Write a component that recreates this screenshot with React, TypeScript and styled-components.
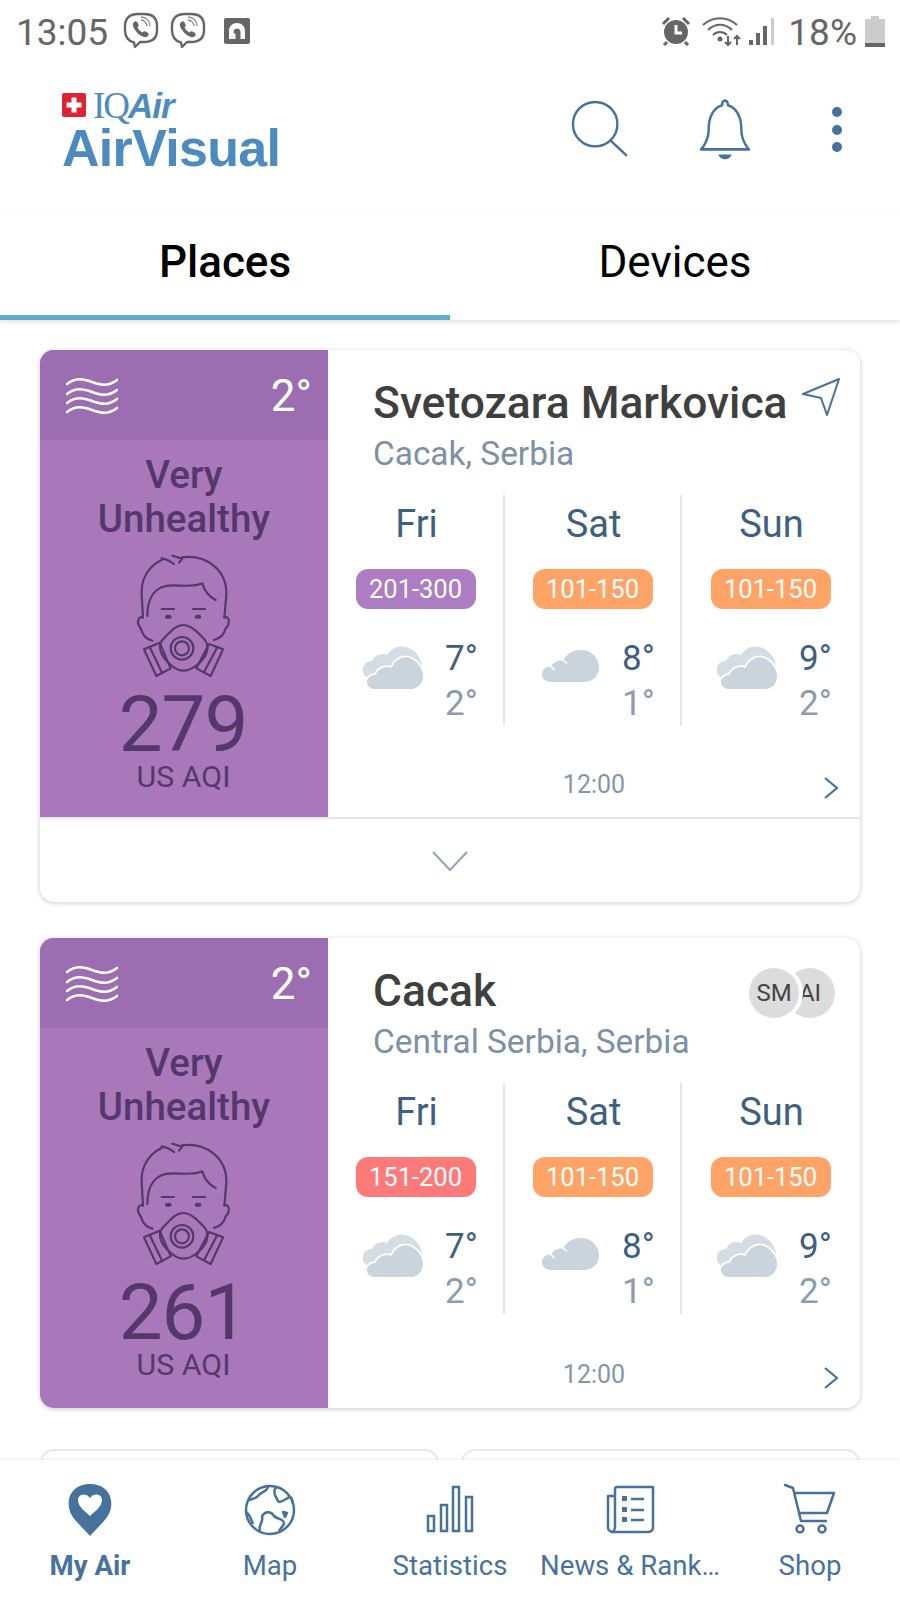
import React from "react";
import styled, { createGlobalStyle } from "styled-components";

const Global = createGlobalStyle`
  html, body { margin: 0; padding: 0; background: #fff; }
  body { font-family: Roboto, "Liberation Sans", sans-serif; }
  * { box-sizing: border-box; }
`;

const Screen = styled.div`
  width: 900px; height: 1600px; background: #fff; overflow: hidden;
  display: flex; flex-direction: column; color: #47729e;
`;
const StatusBar = styled.div`
  height: 60px; flex: none; display: flex; align-items: center; padding: 2px 15px 0 16px; color: #666;
  font-size: 37px; line-height: 1;
`;
const StatusLeft = styled.div`display: flex; align-items: center; gap: 0; flex: 1;`;
const StatusRight = styled.div`display: flex; align-items: center;`;
const StatusText = styled.span<{ $left?: number }>`
  margin-top: 3px; margin-left: ${p => p.$left ?? 0}px;
`;
const Header = styled.div`
  height: 155px; flex: none; display: flex; align-items: flex-start; justify-content: space-between;
  padding: 33px 0 0 62px;
`;
const Logo = styled.div`display: flex; flex-direction: column; color: #4d8bbf;`;
const LogoTop = styled.div`display: flex; align-items: flex-start; height: 35px;`;
const Flag = styled.svg`width: 24px; height: 24px; flex: none; margin-right: 7px;`;
const IQ = styled.span`font-family: "Liberation Serif", serif; font-size: 37px; line-height: 26px; letter-spacing: -2px;`;
const LogoAir = styled.span`font-family: "Liberation Sans", sans-serif; font-style: italic; font-weight: 700; font-size: 35px; line-height: 26px; letter-spacing: -1px;`;
const LogoMain = styled.div`font-family: "Liberation Sans", sans-serif; font-weight: 700; font-size: 52px; line-height: 40px; letter-spacing: -0.7px;`;
const HeaderIcons = styled.div`display: flex; align-items: flex-start; padding: 7px 57px 0 0;`;
const Tabs = styled.div`
  height: 105px; flex: none; display: grid; grid-template-columns: 1fr 1fr; position: relative; z-index: 2;
  box-shadow: 0 2px 4px rgba(0,0,0,.12); background: #fff;
`;
const Tab = styled.div<{ $active?: boolean }>`
  display: flex; align-items: center; justify-content: center; color: #000; font-size: 44px;
  font-weight: ${p => (p.$active ? 500 : 400)}; padding-bottom: 7px;
  border-bottom: 5px solid ${p => (p.$active ? "#5dacca" : "transparent")};
`;
const Content = styled.div`
  flex: 1; min-height: 0; overflow: hidden; padding: 30px 40px 0; display: flex; flex-direction: column;
`;
const Card = styled.div`
  flex: none; background: #fff; border-radius: 14px; overflow: hidden;
  box-shadow: 0 1px 5px rgba(0,0,0,.22); margin-bottom: 36px;
`;
const CardTop = styled.div<{ $h: number }>`
  display: grid; grid-template-columns: 288px 1fr; height: ${p => p.$h}px;
`;
const Side = styled.div`background: #a878bb; display: flex; flex-direction: column; align-items: center; color: #54386b;`;
const SideHead = styled.div`
  width: 100%; height: 90px; flex: none; background: #9d6db1; display: flex; align-items: center; justify-content: space-between;
  padding: 2px 16px 0 26px; color: #fff; font-size: 44px;
`;
const Level = styled.div`
  margin-top: 13px; text-align: center; font-size: 38.5px; line-height: 44px; font-weight: 500;
`;
const Face = styled.svg`width: 130px; height: 150px; flex: none; margin-top: -1px;`;
const Aqi = styled.div`font-size: 78px; line-height: 74px; margin: -2px 2px 0 0; font-weight: 400; letter-spacing: -1px;`;
const AqiLabel = styled.div`font-size: 30.3px; line-height: 34px; margin: -2px 1px 0 0;`;
const Main = styled.div`display: flex; flex-direction: column; min-width: 0;`;
const TitleRow = styled.div`
  display: flex; align-items: center; justify-content: space-between; height: 50px; margin-top: 28px; padding: 0 18px 0 45px;
`;
const Title = styled.div`font-size: 44.4px; font-weight: 500; color: #3f3f3f; white-space: nowrap;`;
const Sub = styled.div`font-size: 33.4px; line-height: 40px; height: 40px; margin-top: 6px; padding-left: 45px; color: #7d90a6;`;
const Forecast = styled.div`display: grid; grid-template-columns: repeat(3, 177px); height: 226px; margin-top: 21px;`;
const Col = styled.div<{ $last?: boolean }>`
  display: flex; flex-direction: column; align-items: center;
  border-right: ${p => (p.$last ? "0" : "2px solid #e3e5e8")};
`;
const Day = styled.div`font-size: 38px; line-height: 54px; margin-top: 2px; padding-left: 2px; color: #3f5f82;`;
const Pill = styled.div<{ $bg: string }>`
  width: 120px; height: 40px; margin-top: 18px; border-radius: 12px; background: ${p => p.$bg}; color: #fff;
  font-size: 25.5px; line-height: 41px; text-align: center;
`;
const Weather = styled.div`align-self: stretch; display: flex; margin-top: 27px;`;
const CloudBox = styled.div`width: 117px; flex: none; padding: 9px 0 0 34px;`;
const Temps = styled.div`display: flex; flex-direction: column;`;
const Hi = styled.div`font-size: 35px; line-height: 45px; color: #3f5f82;`;
const Lo = styled.div`font-size: 35px; line-height: 45px; color: #8a9db0;`;
const Foot = styled.div<{ $extra?: number }>`
  display: grid; grid-template-columns: 1fr auto 1fr; align-items: center; padding-top: ${p => 43 + (p.$extra ?? 0)}px;
`;
const Time = styled.div`grid-column: 2; font-size: 25px; line-height: 42px; color: #8696a8;`;
const FootChevron = styled.svg`grid-column: 3; justify-self: end; width: 18px; height: 24px; margin: 6px 20px 0 0;`;
const Expand = styled.div`
  height: 85px; border-top: 2px solid #e6e7e9; display: flex; justify-content: center; padding-top: 31px;
`;
const Badges = styled.div`display: flex; align-items: center; padding-right: 7px; margin-top: 4px;`;
const Badge = styled.div<{ $front?: boolean }>`
  width: 50px; height: 50px; border-radius: 50%; background: #dcdcdc; color: #444; font-size: 24px; line-height: 50px; text-align: center;
  flex: none;
  ${p => p.$front ? "position: relative; z-index: 1; box-shadow: 0 0 0 4px #fff;" : "margin-left: -14px; overflow: hidden;"}
`;
const Row = styled.div`display: grid; grid-template-columns: 399px 399px; gap: 22px; margin-top: 5px;`;
const MiniCard = styled.div`height: 100px; background: #fff; border-radius: 14px; border: 2px solid #e8e8e8;`;
const Nav = styled.nav`
  flex: none; height: 140px; background: #fff; display: grid; grid-template-columns: repeat(5, 180px); position: relative; z-index: 2;
  box-shadow: 0 -1px 2px rgba(0,0,0,.07); padding-top: 22px;
`;
const NavItem = styled.div`display: flex; flex-direction: column; align-items: center;`;
const NavLabel = styled.div<{ $active?: boolean }>`
  margin-top: 8px; font-size: 27.6px; line-height: 40px; white-space: nowrap; font-weight: ${p => (p.$active ? 700 : 400)};
`;
const NavSvg = styled.svg`width: 60px; height: 56px; flex: none;`;

const Viber = ({ left = 0 }: { left?: number }) => (
  <svg width="36" height="38" viewBox="0 0 36 38" fill="none" style={{ marginLeft: left }}>
    <path d="M11 30.5C5 29 2 25 2 18V14C2 6 7 2 15 2h6c8 0 13 4 13 12v4c0 8-5 12-13 12h-4l-5 5z" stroke="#666" strokeWidth="2.4" strokeLinejoin="round" />
    <path d="M11 10c2-1.500 3-.5 4 1.500s1 2.500-.5 4c1 2 3 4 5 5 1.500-1.500 2-1.500 4-.5s3 2 1.500 4c-1.500 1.500-3 1.500-5.500.5-4-1.700-7-5-9-9-.8-2.500-1-4 .5-5.500z" fill="#666" />
    <path d="M18 8c3 0 6 3 6 6M18 5c5 0 9 4 9 9" stroke="#888" strokeWidth="1.300" />
  </svg>
);

const Waves = () => (
  <svg width="52" height="38" viewBox="0 0 52 38" fill="none" stroke="#fff" strokeWidth="2.600" strokeLinecap="round">
    {[5, 15, 24, 33].map(y => (
      <path key={y} d={`M1 ${y + 2}C10 ${y - 5} 18 ${y - 3} 26 ${y}S42 ${y + 5} 51 ${y - 2}`} />
    ))}
  </svg>
);

const FaceIcon = () => (
  <Face viewBox="0 0 390 450" fill="none" stroke="#54386b" strokeWidth="6.500" strokeLinecap="round" strokeLinejoin="round">
    <path d="M165 72C152 62 140 57 128 55" />
    <path d="M128 60C90 78 65 115 68 165L72 232" />
    <path d="M160 47L190 56L180 68" />
    <path d="M188 52C262 42 325 90 322 165L316 232" />
    <path d="M85 228C85 170 110 136 160 136C190 136 225 142 250 130C255 150 270 170 290 180" />
    <path d="M72 232C55 228 52 250 65 265C72 285 80 298 100 302" />
    <path d="M316 232C335 228 332 255 320 265C315 285 305 295 285 300" />
    <path d="M128 207H165M222 207H258" />
    <ellipse cx="148" cy="230" rx="10" ry="6" fill="#54386b" stroke="none" />
    <ellipse cx="237" cy="230" rx="10" ry="6" fill="#54386b" stroke="none" />
    <path d="M192 255C170 255 155 275 130 300C115 320 125 345 145 365C165 385 178 392 192 392C208 392 225 385 245 365C265 345 272 320 258 300C235 275 215 255 192 255Z" />
    <circle cx="189" cy="325" r="34" />
    <circle cx="189" cy="325" r="21" />
    <path d="M75 328L122 308L155 385L112 408Z" />
    <path d="M92 321L130 400" />
    <path d="M270 312L312 328L275 408L232 385Z" />
    <path d="M295 321L255 397" />
  </Face>
);

const DoubleCloud = () => (
  <svg width="63" height="46" viewBox="0 0 63 46">
    <path d="M8 34C2 32 0 27 1 23C2 18 6 16 10 16C13 9 21 8 25 10C29 3 37 0 44 2C54 5 60 14 60 22L40 34Z" fill="#d3dde3" />
    <path d="M13 45C7 45 4 41 4 37C4 33 8 29 13 29C16 22 24 20 29 22C33 13 42 9 50 13C58 17 62 25 62 31C62 40 55 45 48 45Z" fill="#c9d4dc" stroke="#fff" strokeWidth="1.800" />
  </svg>
);

const SingleCloud = () => (
  <svg width="58" height="34" viewBox="0 0 60 35" style={{ marginLeft: 3, marginTop: 4 }}>
    <path d="M9 34C3 34 0 30 0 26C0 21 4 18 9 18C12 13 17 11 22 12C25 5 32 1 40 1C51 1 59 9 59 19C59 28 52 34 43 34Z" fill="#c9d4dc" />
    <path d="M9 18C11 19 12 20 13 22M22 12C24 13 25 14 26 15" stroke="#fff" strokeWidth="1.500" fill="none" />
  </svg>
);

type F = { day: string; range: string; bg: string; cloud: "d" | "s"; hi: string; lo: string };
const purple = "#ad7cc2", red = "#fe7a7a", orange = "#ffa366";
const days = (first: string, bg: string): F[] => [
  { day: "Fri", range: first, bg, cloud: "d", hi: "7°", lo: "2°" },
  { day: "Sat", range: "101-150", bg: orange, cloud: "s", hi: "8°", lo: "1°" },
  { day: "Sun", range: "101-150", bg: orange, cloud: "d", hi: "9°", lo: "2°" },
];

const Place = ({ title, sub, aqi, h, range, bg, right, expand, extra }: {
  title: string; sub: string; aqi: string; h: number; range: string; bg: string; right: React.ReactNode; expand?: boolean; extra?: number;
}) => (
  <Card>
    <CardTop $h={h}>
      <Side>
        <SideHead><Waves /><span>2°</span></SideHead>
        <Level>Very<br />Unhealthy</Level>
        <FaceIcon />
        <Aqi>{aqi}</Aqi>
        <AqiLabel>US AQI</AqiLabel>
      </Side>
      <Main>
        <TitleRow><Title>{title}</Title>{right}</TitleRow>
        <Sub>{sub}</Sub>
        <Forecast>
          {days(range, bg).map((f, i) => (
            <Col key={f.day} $last={i === 2}>
              <Day>{f.day}</Day>
              <Pill $bg={f.bg}>{f.range}</Pill>
              <Weather>
                <CloudBox>{f.cloud === "d" ? <DoubleCloud /> : <SingleCloud />}</CloudBox>
                <Temps><Hi>{f.hi}</Hi><Lo>{f.lo}</Lo></Temps>
              </Weather>
            </Col>
          ))}
        </Forecast>
        <Foot $extra={extra}>
          <Time>12:00</Time>
          <FootChevron viewBox="0 0 18 24" fill="none" stroke="#47729e" strokeWidth="2.200"><path d="M3 2L15 12L3 22" /></FootChevron>
        </Foot>
      </Main>
    </CardTop>
    {expand && (
      <Expand>
        <svg width="36" height="22" viewBox="0 0 36 22" fill="none" stroke="#8da7c0" strokeWidth="2"><path d="M1 2L18 20L35 2" /></svg>
      </Expand>
    )}
  </Card>
);

export default function App() {
  return (
    <Screen>
      <Global />
      <StatusBar>
        <StatusLeft>
          <StatusText>13:05</StatusText>
          <Viber left={15} />
          <Viber left={11} />
          <svg width="26" height="26" viewBox="0 0 26 26" style={{ marginLeft: 18 }}>
            <rect width="26" height="26" rx="2" fill="#666" />
            <path d="M5 21V13C5 8 8.500 5 13 5s8 3 8 8v8h-4.500v-7c0-2-1.500-3.500-3.500-3.500S9.500 12 9.500 14v1l2 1v5z" fill="#fff" />
          </svg>
        </StatusLeft>
        <StatusRight>
          <svg width="32" height="30" viewBox="0 0 32 30" fill="#666">
            <circle cx="16" cy="16" r="12" />
            <path d="M3 8L9 2M29 8L23 2M7 26L4 29M25 26L28 29" stroke="#666" strokeWidth="3" />
            <path d="M16 9v8h6" stroke="#fff" strokeWidth="3" fill="none" />
          </svg>
          <svg width="42" height="32" viewBox="0 0 42 32" fill="none" stroke="#666" strokeWidth="2" style={{ marginLeft: 10 }}>
            <path d="M1 10C11 1 25 1 35 10M6 15C13 8 23 8 30 15M11 20C15 16 21 16 25 20" />
            <circle cx="18" cy="24" r="2.500" fill="#666" stroke="none" />
            <path d="M26 21v9M23 27l3 3 3-3M35 30v-9M32 24l3-3 3 3" strokeWidth="2" />
          </svg>
          <svg width="28" height="30" viewBox="0 0 28 30" style={{ marginLeft: 4 }}>
            <rect x="1" y="24" width="4" height="5" fill="#666" />
            <rect x="8" y="17" width="4" height="12" fill="#666" />
            <rect x="15" y="10" width="4" height="19" fill="#666" />
            <rect x="23" y="2" width="3" height="27" fill="#ccc" />
          </svg>
          <StatusText $left={12}>18%</StatusText>
          <svg width="20" height="31" viewBox="0 0 20 31" style={{ marginLeft: 8 }}>
            <path d="M6 0h8v3h6v28H0V3h6z" fill="#ccc" />
            <rect y="27" width="20" height="4" fill="#666" />
          </svg>
        </StatusRight>
      </StatusBar>
      <Header>
        <Logo>
          <LogoTop>
            <Flag viewBox="0 0 24 24">
              <rect width="24" height="24" rx="2" fill="#dc2434" />
              <path d="M9.500 4.500h5v5h5v5h-5v5h-5v-5h-5v-5h5z" fill="#fff" />
            </Flag>
            <IQ>IQ</IQ><LogoAir>Air</LogoAir>
          </LogoTop>
          <LogoMain>AirVisual</LogoMain>
        </Logo>
        <HeaderIcons>
          <svg width="58" height="58" viewBox="0 0 60 60" fill="none" stroke="#47729e" strokeWidth="2.500">
            <circle cx="25" cy="25" r="23" />
            <path d="M41 42L57 57" strokeLinecap="round" />
          </svg>
          <svg width="52" height="65" viewBox="0 0 54 62" preserveAspectRatio="none" fill="none" stroke="#47729e" strokeWidth="2.500" style={{ marginLeft: 70, marginTop: -2 }}>
            <path d="M2 49C2 49 10 42 10 30C10 17 16 9 24 7C24 1 30 1 30 7C38 9 44 17 44 30C44 42 52 49 52 49Z" strokeLinejoin="round" />
            <path d="M20 54H34C32 60 22 60 20 54Z" fill="#47729e" stroke="none" />
          </svg>
          <svg width="12" height="48" viewBox="0 0 12 48" fill="#47729e" style={{ marginLeft: 80, marginTop: 6 }}>
            <circle cx="6" cy="6" r="5" /><circle cx="6" cy="24" r="5" /><circle cx="6" cy="41" r="5" />
          </svg>
        </HeaderIcons>
      </Header>
      <Tabs>
        <Tab $active>Places</Tab>
        <Tab>Devices</Tab>
      </Tabs>
      <Content>
        <Place
          title="Svetozara Markovica" sub="Cacak, Serbia" aqi="279" h={467} range="201-300" bg={purple} expand
          right={
            <svg width="40" height="40" viewBox="0 0 40 40" fill="none" stroke="#47729e" strokeWidth="2" strokeLinejoin="round" style={{ marginRight: 1, marginTop: -12 }}>
              <path d="M38 2L2 17L20 21L26 38Z" />
            </svg>
          }
        />
        <Place
          title="Cacak" sub="Central Serbia, Serbia" aqi="261" h={470} range="151-200" bg={red} extra={2}
          right={<Badges><Badge $front>SM</Badge><Badge>AI</Badge></Badges>}
        />
        <Row><MiniCard /><MiniCard /></Row>
      </Content>
      <Nav>
        <NavItem>
          <NavSvg viewBox="0 0 60 56">
            <path d="M30 54L16 39C3 26 7 2 30 2S57 26 44 39Z" fill="#47729e" />
            <path d="M30 34C26 30 18 25 18 18C18 12 26 10 30 16C34 10 42 12 42 18C42 25 34 30 30 34Z" fill="#fff" />
          </NavSvg>
          <NavLabel $active>My Air</NavLabel>
        </NavItem>
        <NavItem>
          <NavSvg viewBox="0 0 60 56" fill="none" stroke="#47729e" strokeWidth="2.500" strokeLinejoin="round">
            <circle cx="30" cy="28" r="24" />
            <path d="M28 4C28 10 20 10 18 14C15 18 10 16 9 19M37 5C33 7 34 13 37 17C38 22 43 19 46 17C50 14 52 14 53 22" />
            <path d="M6 30C10 32 11 38 13 42M20 50C18 42 24 40 22 34C26 28 32 30 34 34C38 38 44 36 44 42L39 49" />
            <path d="M43 30l4 1-2 4z" fill="#47729e" />
          </NavSvg>
          <NavLabel>Map</NavLabel>
        </NavItem>
        <NavItem>
          <NavSvg viewBox="0 0 60 56" fill="none" stroke="#47729e" strokeWidth="2.500">
            <rect x="8" y="34" width="6" height="15" />
            <rect x="21" y="23" width="6" height="26" />
            <rect x="33" y="5" width="6" height="44" />
            <rect x="46" y="15" width="6" height="34" />
          </NavSvg>
          <NavLabel>Statistics</NavLabel>
        </NavItem>
        <NavItem>
          <NavSvg viewBox="0 0 60 56" fill="none" stroke="#47729e" strokeWidth="2.500" strokeLinejoin="round">
            <path d="M15 14H8V45C8 48 10 50 13 50H48C51 50 53 48 53 45V5H17C15.500 5 15 6 15 7V45C15 48 13 50 11 50" />
            <path d="M31 17H44M31 28H44M31 38H44" />
            <path d="M22 14h5v5h-5zM22 25h5v5h-5zM22 35h5v5h-5z" fill="#47729e" stroke="none" />
          </NavSvg>
          <NavLabel>News &amp; Rank…</NavLabel>
        </NavItem>
        <NavItem>
          <NavSvg viewBox="0 0 60 56" fill="none" stroke="#47729e" strokeWidth="2.500" strokeLinejoin="round">
            <path d="M5 3L13 6L21 39H46" strokeLinecap="round" />
            <path d="M15 11H54L47 31H19" />
            <circle cx="20" cy="47" r="3.500" />
            <circle cx="42" cy="47" r="3.500" />
          </NavSvg>
          <NavLabel>Shop</NavLabel>
        </NavItem>
      </Nav>
    </Screen>
  );
}
